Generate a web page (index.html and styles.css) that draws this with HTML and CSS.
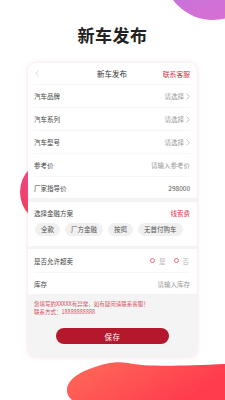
FILE: index.html
```html
<!DOCTYPE html>
<html lang="zh">
<head>
<meta charset="utf-8">
<link rel="stylesheet" href="styles.css">
</head>
<body>
<div class="page">
  <div class="deco deco-top"></div>
  <div class="deco deco-left"></div>
  <svg class="deco deco-bottom" viewBox="60 355 165 45" width="165" height="45">
    <defs>
      <linearGradient id="blob" x1="0" y1="0" x2="1" y2="0.4">
        <stop offset="0" stop-color="#ff6c58"/>
        <stop offset="1" stop-color="#ff3b4e"/>
      </linearGradient>
    </defs>
    <path d="M72 400 C62 391 66 377 92 368 C106 363 116 361 128 363 C146 367 180 366 225 364 L225 400 Z" fill="url(#blob)"/>
  </svg>

  <h1 class="title">新车发布</h1>

  <div class="card">
    <div class="section">
      <div class="head">
        <span class="back"><svg width="4" height="7" viewBox="0 0 4 7"><path d="M3.5 0.5 L0.8 3.5 L3.5 6.5" fill="none" stroke="#cfcfcf" stroke-width="0.7"/></svg></span>
        <span class="head-title">新车发布</span>
        <span class="head-link">联系客服</span>
      </div>
      <div class="row"><span class="label">汽车品牌</span><span class="value">请选择<svg class="chev" width="4" height="7" viewBox="0 0 4 7"><path d="M0.6 0.6 L3.3 3.5 L0.6 6.4" fill="none" stroke="#9a9a9a" stroke-width="0.6"/></svg></span></div>
      <div class="row"><span class="label">汽车系列</span><span class="value">请选择<svg class="chev" width="4" height="7" viewBox="0 0 4 7"><path d="M0.6 0.6 L3.3 3.5 L0.6 6.4" fill="none" stroke="#9a9a9a" stroke-width="0.6"/></svg></span></div>
      <div class="row"><span class="label">汽车型号</span><span class="value">请选择<svg class="chev" width="4" height="7" viewBox="0 0 4 7"><path d="M0.6 0.6 L3.3 3.5 L0.6 6.4" fill="none" stroke="#9a9a9a" stroke-width="0.6"/></svg></span></div>
      <div class="row"><span class="label">参考价</span><span class="value">请输入参考价</span></div>
      <div class="row last"><span class="label">厂家指导价</span><span class="value dark">298000</span></div>
    </div>

    <div class="section fin">
      <div class="fin-head"><span class="label">选择金融方案</span><span class="red">线索费</span></div>
      <div class="chips">
        <span class="chip">全款</span>
        <span class="chip">厂方金融</span>
        <span class="chip">按揭</span>
        <span class="chip">无首付购车</span>
      </div>
    </div>

    <div class="section">
      <div class="row first"><span class="label">是否允许超卖</span>
        <span class="radios">
          <span class="radio"><i class="dot"></i>是</span>
          <span class="radio"><i class="dot"></i>否</span>
        </span>
      </div>
      <div class="row last"><span class="label">库存</span><span class="value">请输入库存</span></div>
    </div>

    <div class="notice">
      <p>您填写的XXXXX有异常，如有疑问请联系客服！</p>
      <p>联系方式：18888888888</p>
    </div>

    <div class="actions"><button class="save">保存</button></div>
  </div>
</div>
</body>
</html>
```

FILE: styles.css
```css
* { box-sizing: border-box; margin: 0; padding: 0; }
html, body { width: 225px; height: 400px; }
body {
  background: #ffffff;
  font-family: "Noto Sans CJK SC", "Noto Sans", "Liberation Sans", sans-serif;
  overflow: hidden;
}
.page {
  position: relative;
  width: 225px;
  height: 400px;
  overflow: hidden;
  display: flex;
  flex-direction: column;
  align-items: center;
}
.deco { position: absolute; z-index: 0; }
.deco-top {
  left: 163px;
  top: -80px;
  width: 100px;
  height: 100px;
  border-radius: 50%;
  background: linear-gradient(160deg, #9f7ee8 0%, #c374dc 55%, #e06dcf 100%);
}
.deco-left {
  left: 20px;
  top: 159px;
  width: 66px;
  height: 66px;
  border-radius: 50%;
  background: linear-gradient(180deg, #ee4a93 0%, #f23e6a 60%, #f33a4e 100%);
}
.deco-bottom { left: 60px; top: 355px; }

.title {
  position: relative;
  z-index: 1;
  margin-top: 25px;
  font-size: 17px;
  line-height: 20px;
  font-weight: 700;
  color: #222;
  letter-spacing: 0.5px;
}
.card {
  position: relative;
  z-index: 1;
  margin-top: 18px;
  width: 169px;
  background: #f4f4f4;
  border-radius: 8px;
  box-shadow: 0 0 5px rgba(235, 120, 140, 0.28);
  overflow: hidden;
  display: flex;
  flex-direction: column;
  gap: 4px;
  padding-bottom: 13px;
}
.section { background: #fff; padding: 0 7px 0 6px; }
.card > .section + .section + .section { margin-top: -1px; }

.head {
  height: 21px;
  display: grid;
  grid-template-columns: 1fr auto 1fr;
  align-items: center;
}
.back { display: flex; align-items: center; padding-left: 1px; }
.head-title { font-size: 7.5px; color: #333; }
.head-link { justify-self: end; font-size: 6.8px; color: #d2354b; }

.row {
  height: 23px;
  display: flex;
  align-items: center;
  justify-content: space-between;
  border-top: 1px solid #f7f7f7;
}
.row.first { border-top: none; }
.row.last { height: 22px; }
.label { font-size: 6.5px; color: #444; }
.value {
  font-size: 6.5px;
  color: #9a9a9a;
  display: flex;
  align-items: center;
  gap: 2px;
}
.value.dark { color: #555; }
.chev { display: block; }

.fin-head {
  height: 21px;
  display: flex;
  align-items: center;
  justify-content: space-between;
  padding-top: 1px;
}
.red { font-size: 6.5px; color: #d2354b; }
.chips {
  display: flex;
  gap: 5px;
  padding: 0 0 10px 1px;
}
.chip {
  height: 13px;
  line-height: 13px;
  padding: 0 6px;
  border-radius: 7px;
  background: #f0f0f0;
  font-size: 6.5px;
  color: #555;
}

.radios { display: flex; gap: 8px; padding-right: 1px; }
.radio {
  display: flex;
  align-items: center;
  gap: 4px;
  font-size: 6.5px;
  color: #b5b5b5;
}
.dot {
  width: 5px;
  height: 5px;
  border-radius: 50%;
  border: 0.7px solid #e8707f;
  display: block;
}

.notice { padding: 2px 6px 0; }
.notice p {
  font-size: 5.5px;
  line-height: 8px;
  color: #d64a5c;
  white-space: nowrap;
}
.actions { display: flex; justify-content: center; padding-top: 8px; }
.save {
  width: 113px;
  height: 16px;
  border: none;
  border-radius: 8px;
  background: #b3182c;
  color: #fff;
  font-family: inherit;
  font-size: 7.5px;
  letter-spacing: 0.5px;
}
```
